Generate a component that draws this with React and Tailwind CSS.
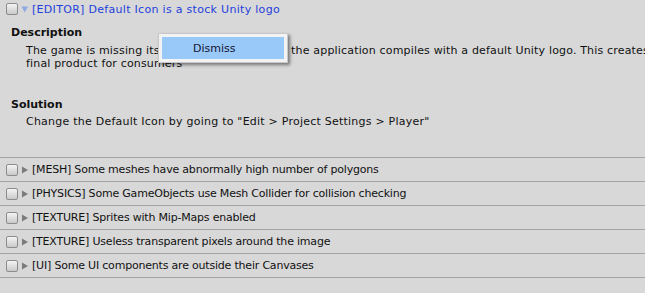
import React from 'react';

const issues = [
  '[MESH] Some meshes have abnormally high number of polygons',
  '[PHYSICS] Some GameObjects use Mesh Collider for collision checking',
  '[TEXTURE] Sprites with Mip-Maps enabled',
  '[TEXTURE] Useless transparent pixels around the image',
  '[UI] Some UI components are outside their Canvases',
];

const Checkbox = () => (
  <div className="w-[12px] h-[12px] shrink-0 rounded-[2px] border border-[#8c8c8c] bg-gradient-to-b from-[#f4f4f4] to-[#c9c9c9]" />
);

const Arrow = ({ open }) =>
  open ? (
    <svg width="8" height="8" viewBox="0 0 8 8" className="shrink-0">
      <path d="M0.5 1.5 L7 1.5 L3.75 7.5 Z" fill="#8ea9e4" />
    </svg>
  ) : (
    <svg width="8" height="8" viewBox="0 0 8 8" className="shrink-0">
      <path d="M1 0.5 L7 4 L1 7.5 Z" fill="#7c7c7c" />
    </svg>
  );

export default function App() {
  return (
    <div className="relative w-[645px] h-[293px] overflow-hidden bg-[#d8d8d8] text-[11px] text-[#111111] font-['DejaVu_Sans',sans-serif] leading-[13px]">
      {/* Expanded issue */}
      <div className="flex items-center gap-[3px] h-[18px] pl-[6px]">
        <Checkbox />
        <Arrow open />
        <span className="text-[#1f3fdc] whitespace-nowrap tracking-[0.3px]">[EDITOR] Default Icon is a stock Unity logo</span>
      </div>

      <div className="pl-[11px] pt-[8px]">
        <div className="font-bold">Description</div>
        <div className="pl-[15px] pt-[5px] whitespace-nowrap tracking-[0.17px]">
          <div>The game is missing its own custom icon, and the application compiles with a default Unity logo. This creates a poor</div>
          <div>final product for consumers</div>
        </div>

        <div className="font-bold pt-[28px]">Solution</div>
        <div className="pl-[15px] pt-[4px] whitespace-nowrap tracking-[0.23px]">
          Change the Default Icon by going to "Edit &gt; Project Settings &gt; Player"
        </div>
      </div>

      {/* Collapsed issues */}
      <div className="mt-[29px] border-t border-[#a3a3a3] tracking-[-0.2px]">
        {issues.map((t) => (
          <div key={t} className="flex items-center gap-[3px] h-[24px] pl-[6px] border-b border-[#a3a3a3]">
            <Checkbox />
            <Arrow />
            <span className="whitespace-nowrap">{t}</span>
          </div>
        ))}
      </div>

      {/* Context menu */}
      <div className="absolute left-[158px] top-[33px] w-[130px] p-[3px] bg-[#f2f2f2] border border-[#c8c8c8] shadow-[2px_2px_3px_rgba(0,0,0,0.45)]">
        <div className="h-[22px] bg-[#99c9f8] flex items-center pl-[31px] text-[#141433]">Dismiss</div>
      </div>
    </div>
  );
}
